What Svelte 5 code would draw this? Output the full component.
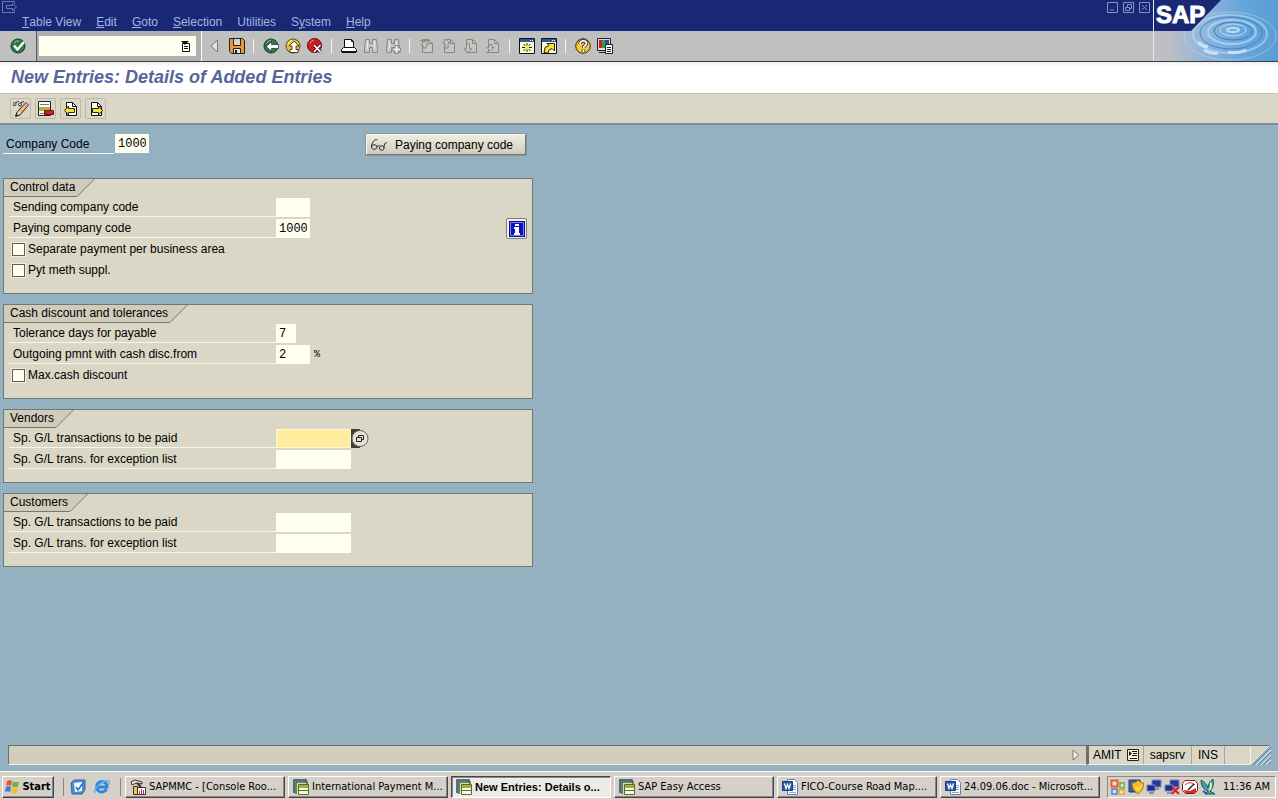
<script lang="ts">
    type Field = {
        kind: 'text' | 'check';
        id: string;
        label: string;
        value?: string;
        size?: 'xs' | 'sm' | 'md';
        unit?: string;
        info?: boolean;
        focused?: boolean;
    };

    const menus = [
        ['', 'T', 'able View'],
        ['', 'E', 'dit'],
        ['', 'G', 'oto'],
        ['', 'S', 'election'],
        ['Utilities', '', ''],
        ['S', 'y', 'stem'],
        ['', 'H', 'elp']
    ];

    const toolGroups = [
        [['save', 'Save']],
        [['back', 'Back'], ['exit', 'Exit'], ['cancel', 'Cancel']],
        [['print', 'Print'], ['find', 'Find'], ['findnext', 'Find next']],
        [['first', 'First page'], ['prev', 'Previous page'], ['next', 'Next page'], ['last', 'Last page']],
        [['session', 'Create session'], ['shortcut', 'Create shortcut']],
        [['help', 'Help'], ['layout', 'Customize layout']]
    ];

    const appTools = [
        ['toggle', 'Display / change'],
        ['delete', 'Delete'],
        ['pageback', 'Previous entry'],
        ['pagenext', 'Next entry']
    ];

    const groups: { title: string; fields: Field[] }[] = [
        {
            title: 'Control data',
            fields: [
                { kind: 'text', id: 'sending', label: 'Sending company code', size: 'sm' },
                { kind: 'text', id: 'paying', label: 'Paying company code', value: '1000', size: 'sm', info: true },
                { kind: 'check', id: 'separate', label: 'Separate payment per business area' },
                { kind: 'check', id: 'suppl', label: 'Pyt meth suppl.' }
            ]
        },
        {
            title: 'Cash discount and tolerances',
            fields: [
                { kind: 'text', id: 'days', label: 'Tolerance days for payable', value: '7', size: 'xs' },
                { kind: 'text', id: 'outgoing', label: 'Outgoing pmnt with cash disc.from', value: '2', size: 'sm', unit: '%' },
                { kind: 'check', id: 'maxdisc', label: 'Max.cash discount' }
            ]
        },
        {
            title: 'Vendors',
            fields: [
                { kind: 'text', id: 'vpaid', label: 'Sp. G/L transactions to be paid', size: 'md', focused: true },
                { kind: 'text', id: 'vexc', label: 'Sp. G/L trans. for exception list', size: 'md' }
            ]
        },
        {
            title: 'Customers',
            fields: [
                { kind: 'text', id: 'cpaid', label: 'Sp. G/L transactions to be paid', size: 'md' },
                { kind: 'text', id: 'cexc', label: 'Sp. G/L trans. for exception list', size: 'md' }
            ]
        }
    ];

    const tasks = [
        { icon: 'mmc', label: 'SAPMMC - [Console Roo...' },
        { icon: 'sapwin', label: 'International Payment M...' },
        { icon: 'sapwin', label: 'New Entries: Details o...', active: true },
        { icon: 'sapwin', label: 'SAP Easy Access' },
        { icon: 'word', label: 'FICO-Course Road Map....' },
        { icon: 'word', label: '24.09.06.doc - Microsoft...' }
    ];

    const tray = ['office', 'shield', 'net', 'netoff', 'gauge', 'bird'];
</script>

{#snippet page(stroke: string, fill: string)}
    <path d="M3.5 1.5h6l4 4v9h-10z" {fill} {stroke} />
    <path d="M9.5 1.5v4h4" fill="none" {stroke} />
{/snippet}

{#snippet screens()}
    <path d="M6 1h9v7H6z" fill="#2838a0" stroke="#7888b8" />
    <path d="M8 9h5v2H8z" fill="#8890a8" />
    <path d="M1 6h8v6H1z" fill="#1c2c90" stroke="#7888b8" />
    <path d="M3 13h5v2H3z" fill="#8890a8" />
{/snippet}

{#snippet icon(name: string)}
    <svg class="icon" viewBox="0 0 16 16" aria-hidden="true">
        {#if name === 'ok'}
            <circle cx="8" cy="8" r="7" fill="#2c7a45" stroke="#173a24" />
            <path d="M4 5a5 5 0 0 1 5-2" fill="none" stroke="#8cc89a" />
            <path d="M4 7.5l3.5 4L14 4" fill="none" stroke="#fff" stroke-width="2.4" />
        {:else if name === 'save'}
            <path d="M.5.5h13l2 2v13H2.5l-2-2z" fill="#e8983a" stroke="#222" />
            <path d="M4.5 1v6.5h7V1" fill="#d8d4d0" stroke="#222" />
            <path d="M4.5 15v-4.5h7V15" fill="#e4e0dc" stroke="#222" />
            <path d="M6 12h2v3H6z" fill="#222" />
        {:else if name === 'back'}
            <circle cx="8" cy="8" r="7" fill="#2c7a45" stroke="#173a24" />
            <path d="M4 5a5 5 0 0 1 4-3" fill="none" stroke="#8cc89a" />
            <path d="M3.5 8.5l5-5v3h7v4h-7v3z" fill="#fff" stroke="#112" stroke-width=".6" />
        {:else if name === 'exit'}
            <circle cx="8" cy="8" r="7" fill="#f0c428" stroke="#5c4608" />
            <path d="M3 6a5 5 0 0 1 4-3.5" fill="none" stroke="#fff6b0" />
            <path d="M9 3L4 8h3v3.5H5v3h8v-3h-2V8h3z" fill="#fff" stroke="#222" stroke-width=".8" />
        {:else if name === 'cancel'}
            <circle cx="7.5" cy="7.5" r="7" fill="#d01c20" stroke="#5c0c0c" />
            <path d="M3 5.5a5 5 0 0 1 4-3.5" fill="none" stroke="#f49090" />
            <path d="M7 7l6.5 7M13.5 7L7 14" stroke="#400" stroke-width="3.2" />
            <path d="M7 7l6.5 7M13.5 7L7 14" stroke="#fff" stroke-width="1.8" />
        {:else if name === 'print'}
            <path d="M3.5 9.5v-8h7l2 2v6" fill="#fff" stroke="#111" />
            <path d="M10.5 1.5v2h2" fill="none" stroke="#111" />
            <path d="M2.5 9.5h11l2 2V14H.5v-2.5z" fill="#fff" stroke="#111" />
            <path d="M1 14h14" fill="none" stroke="#111" stroke-width="2" />
        {:else if name === 'find' || name === 'findnext'}
            <path d="M2.500 1.500h4v4h3v-4h4l1 9v4h-5v-5h-3v5h-5v-4z" fill="#c6c6c6" stroke="#888" />
            <path d="M4.5 3v8M11.5 3v8" stroke="#eee" />
            {#if name === 'findnext'}
                <path d="M11.5 7v9M7.5 11.5H16" stroke="#888" stroke-width="4" />
                <path d="M11.5 8v7M8.5 11.5H15" stroke="#eee" stroke-width="2" />
            {/if}
        {:else if name === 'first'}
            {@render page('#888880', '#c6c6be')}
            <path d="M1 2.5h9M5.5 3L2 7h2v3h3V7h2z" fill="#ccccc2" stroke="#888880" />
        {:else if name === 'prev'}
            {@render page('#888880', '#c6c6be')}
            <path d="M5 1.5L1.5 5H4v5h3V5h2z" fill="#ccccc2" stroke="#888880" />
        {:else if name === 'next'}
            {@render page('#888880', '#c6c6be')}
            <path d="M5 14.5L1 11h2.5V6h3v5H9z" fill="#ccccc2" stroke="#888880" />
        {:else if name === 'last'}
            {@render page('#888880', '#c6c6be')}
            <path d="M1 14.5h9M5.5 13L2 9.5h2v-3h3v3h2z" fill="#ccccc2" stroke="#888880" />
        {:else if name === 'session' || name === 'shortcut'}
            <path d="M.5.5h15v15H.5z" fill="#fffbd8" stroke="#111" />
            <path d="M1 1h14v3H1z" fill="#2c5a94" />
            <path d="M11 2h1v1h-1zM13 2h1v1h-1z" fill="#fff" />
            {#if name === 'session'}
                <path d="M8 5v9M3 9.5h10M4.5 6l7 7M11.5 6l-7 7" stroke="#222" />
                <path d="M6 7.5h4v4H6z" fill="#f8e840" />
            {:else}
                <path d="M3 14.5l1-5 4-2-2-2h7.5V13L11 10.5 8 12l-1 3z" fill="#f4e430" stroke="#222" />
            {/if}
        {:else if name === 'help'}
            <circle cx="8" cy="8" r="7.3" fill="#f4c83c" stroke="#3c300c" />
            <path d="M5 6c0-4 6.5-4 6.5-.5 0 2-3 2-3 4.5M8.5 11.5V14" fill="none" stroke="#222" stroke-width="3.4" />
            <path d="M5 6c0-4 6.5-4 6.5-.5 0 2-3 2-3 4.5M8.5 11.5V14" fill="none" stroke="#fff" stroke-width="1.8" />
        {:else if name === 'layout'}
            <path d="M.5.5h13v12H.5z" fill="#ddd" stroke="#222" />
            <path d="M2 2h3v8H2z" fill="#d81828" />
            <path d="M5 2h3v8H5z" fill="#20a838" />
            <path d="M8 2h4v8H8z" fill="#2848c0" />
            <path d="M2 14h6v1H2z" fill="#222" />
            <path d="M8.5 6.5h7v9h-7z" fill="#fff" stroke="#222" />
            <path d="M10 9.5h4M10 11.5h4M10 13.5h4" stroke="#222" />
        {:else if name === 'toggle'}
            <path d="M0 3.5C0 1 3 1 3 3S0 5 0 3.5M3 2c1-2 2-2 3-1M5.5 3.5c0-2 3-2 3 0s-3 2-3 0M8 2c1-2 3-1 3-1" fill="none" stroke="#222" />
            <path d="M13 1.5L15.5 4 7 14l-4.5 1.5L4 11z" fill="#f0b870" stroke="#222" />
            <path d="M13 2l2 2-2 2.5-2-2z" fill="#e4a4a4" />
            <path d="M5 10.5L7.5 13" stroke="#fff" />
            <path d="M2.5 15.5L3 13l2 1.5z" fill="#222" />
        {:else if name === 'delete'}
            <path d="M.5.5h12v14H.5z" fill="#fff" stroke="#222" />
            <path d="M2 3.5h9M2 12.5h6" stroke="#6c7c98" />
            <path d="M1 6h11v4H1z" fill="#b4b43c" />
            <path d="M6.5 9.5h9v4h-9z" fill="#d42020" stroke="#701010" />
        {:else if name === 'pageback'}
            {@render page('#111', '#fff')}
            <path d="M1.5 9.5l4-4.5v2.5h6v4h-6V14z" fill="#f4e430" stroke="#222" />
        {:else if name === 'pagenext'}
            {@render page('#111', '#fff')}
            <path d="M14.5 9.5l-4-4.5v2.5h-6v4h6V14z" fill="#f4e430" stroke="#222" />
        {:else if name === 'glasses'}
            <path d="M.5 10C.5 7 6 7 6 10S.5 13 .5 10M.5 9.5C1 5 4 1.5 6.5 3M6 10c1-2 2-2 3-.5M8.5 11c0-3 4.5-3 4.5 0s-4.500 3-4.500 0M13 10.5c0-3 1-5 3-5" fill="none" stroke="#222" />
        {:else if name === 'info'}
            <path d="M0 0h16v16H0z" fill="#000c9c" />
            <path d="M1.5 1.5h13v13h-13z" fill="#0810c8" stroke="#8088e0" />
            <path d="M6 3h4v2H6zM5 6h5v6h1v2H5v-2h1V8H5z" fill="#fff" />
        {:else if name === 'mmc'}
            <path d="M1 3l4-2 7 2v2L6 4 2 6z" fill="#e8e4d8" stroke="#333" />
            <path d="M7 4l4 4" stroke="#333" stroke-width="2" />
            <path d="M3.5 7.5h4v8h-4z" fill="#f0c830" stroke="#333" />
            <path d="M7.5 8.5h8v7h-8z" fill="#fff" stroke="#333" />
            <path d="M9.5 12v3M11.5 10v5M13.5 11v4" stroke="#d02060" />
        {:else if name === 'sapwin'}
            <path d="M1 14V1h12v3" fill="#b8c8d8" stroke="#284878" stroke-width="1.5" />
            <path d="M3 15V3h11v3" fill="#d4dca8" stroke="#486830" stroke-width="1.5" />
            <path d="M5.5 5.5h10v10h-10z" fill="#f8f8ec" stroke="#586c28" />
            <path d="M6 6h9v3H6z" fill="#98b040" />
            <path d="M6 11.5h9" stroke="#586c28" />
        {:else if name === 'word'}
            <path d="M5.5.5h7l3 3v12h-10z" fill="#fff" stroke="#6080b8" />
            <path d="M11 6.5h3M11 8.5h3M11 10.5h3M7 13.5h7" stroke="#88a4d0" />
            <path d="M.5 2.5h10v9H.5z" fill="#2c58a8" stroke="#183c80" />
            <path d="M2.5 4.5l1.5 5 1.5-4 1.5 4 1.5-5" fill="none" stroke="#fff" stroke-width="1.3" />
        {:else if name === 'desktop'}
            <path d="M1 4l3-3h11v10l-3 4H2z" fill="#4c8cd0" stroke="#3068a8" />
            <path d="M4 4l8-1v9l-7 1z" fill="#f4f8ff" />
            <path d="M6 8l2 3 5-7" fill="none" stroke="#2868b0" stroke-width="1.5" />
        {:else if name === 'ie'}
            <path d="M12.5 10a5.2 5.2 0 1 1 .5-2H4" fill="none" stroke="#2c88d8" stroke-width="3" />
            <path d="M1 14C-1 10 9 0 15 2c1 1 0 3-1 4" fill="none" stroke="#60b0e8" stroke-width="1.4" />
        {:else if name === 'flag'}
            <path d="M2 2c2-1 4-1 5 0L6 7C5 6 3 6 1 7z" fill="#e8582c" />
            <path d="M8 2.5c2 1 4 1 6 0l-1 5c-2 1-4 1-6 0z" fill="#6cb43c" />
            <path d="M1 8c2-1 4-1 5 0l-1 5c-1-1-3-1-5 0z" fill="#3c78d8" />
            <path d="M7 8.5c2 1 4 1 6 0l-1 5c-2 1-4 1-6 0z" fill="#f4bc28" />
        {:else if name === 'office'}
            <path d="M1.5 1.5h6v6h-6z" fill="#fbe0d0" stroke="#e05c28" stroke-width="2" />
            <path d="M10 4h4v5h-4z" fill="#dcecd0" stroke="#78a840" stroke-width="1.5" />
            <path d="M2 10h5v5H2z" fill="#d4e4f8" stroke="#4c80c8" stroke-width="1.5" />
            <path d="M9 11h5v4H9z" fill="#fce8b0" stroke="#e8a830" stroke-width="1.5" />
        {:else if name === 'shield'}
            <path d="M1 1h11v12H1z" fill="#3860a8" stroke="#203c70" />
            <path d="M4 4c3 0 5-1 6-3 1 2 3 3 5.5 3 0 5-1 8-5.5 11C6 12 4 9 4 4z" fill="#f8c020" stroke="#a87408" />
            <path d="M8 8l2 3 4-5" fill="none" stroke="#fff0a0" />
        {:else if name === 'net'}
            {@render screens()}
        {:else if name === 'netoff'}
            {@render screens()}
            <path d="M8 8l7 7M15 8l-7 7" stroke="#e01c20" stroke-width="2" />
        {:else if name === 'gauge'}
            <path d="M3 1.5h10l2.5 3v7l-3 3h-9l-3-3v-7z" fill="#fff" stroke="#702018" />
            <path d="M2 11l6 1 6-3v4l-2 1H4l-2-2z" fill="#d82820" />
            <path d="M3 6c3-3 7-3 10 0" fill="none" stroke="#d82820" />
            <path d="M6 11l6-6" stroke="#222" stroke-width="1.5" />
        {:else if name === 'bird'}
            <path d="M1 1c4 2 6 5 7 8 0-4 2-7 5-9 1 5 0 9-3 12l5 3H5l3-3C4 11 1 7 1 1z" fill="#38a8a8" stroke="#185858" />
            <path d="M10 4c2 1 1 5-1 7" fill="none" stroke="#e8f4a0" stroke-width="2" />
            <path d="M3 12l4 3" stroke="#3050b0" stroke-width="2" />
        {/if}
    </svg>
{/snippet}

<div class="screen">
    <header class="head">
        <div class="head-main">
            <div class="navy">
                <div class="caption">
                    <svg class="exit-glyph" viewBox="0 0 16 12" aria-hidden="true">
                        <path d="M12.5 3V.5H.5v11h12V9M4.5 4.5h6v-2l4 3.5-4 3.5v-2h-6z" fill="none" stroke="#6878b4" />
                    </svg>
                    <div class="win-buttons">
                        <button aria-label="Minimize">
                            <svg viewBox="0 0 11 11"><path d="M.5.5h10v10H.5zM3 8h4" /></svg>
                        </button>
                        <button aria-label="Restore">
                            <svg viewBox="0 0 11 11"><path d="M.5.5h10v10H.5zM2.5 5.5h4v3h-4zM4.5 5V2.5h4v4H7" /></svg>
                        </button>
                        <button aria-label="Close">
                            <svg viewBox="0 0 11 11"><path d="M.5.5h10v10H.5zM3 3l5 5M8 3L3 8" /></svg>
                        </button>
                    </div>
                </div>
                <nav class="menu">
                    {#each menus as [before, key, after]}
                        <button>{before}<u>{key}</u>{after}</button>
                    {/each}
                </nav>
            </div>

            <div class="toolbar">
                <button class="ok" aria-label="Enter">{@render icon('ok')}</button>
                <div class="command">
                    <input aria-label="Command" />
                    <button aria-label="Command history">
                        <svg viewBox="0 0 10 11" aria-hidden="true">
                            <path d="M1.5 2.5h7v8h-7z" fill="#fff" stroke="#111" />
                            <path d="M0 0h8L4 4zM3 5h4v1H3zM3 7h4v1H3z" fill="#111" />
                        </svg>
                    </button>
                </div>
                <button class="collapse" aria-label="Hide command field">
                    <svg viewBox="0 0 8 12" aria-hidden="true"><path d="M7.5 0v12L1 6z" fill="#e4e4e4" stroke="#777" /></svg>
                </button>
                {#each toolGroups as group}
                    <div class="tool-group">
                        {#each group as [name, label]}
                            <button aria-label={label}>{@render icon(name)}</button>
                        {/each}
                    </div>
                {/each}
            </div>
        </div>

        <div class="brand">
            <svg class="water" viewBox="0 0 124 61" preserveAspectRatio="none" aria-hidden="true">
                <defs>
                    <linearGradient id="sky" x1="0" y1="0" x2="1" y2="0">
                        <stop offset="0" stop-color="#c0c0c0" />
                        <stop offset=".12" stop-color="#bcbec4" />
                        <stop offset=".4" stop-color="#93b6dc" />
                        <stop offset=".7" stop-color="#68a6da" />
                        <stop offset="1" stop-color="#5a9cd6" />
                    </linearGradient>
                </defs>
                <path d="M0 0h124v61H0z" fill="url(#sky)" />
                <g fill="none" stroke="#b9dcf5">
                    <ellipse cx="79" cy="30" rx="6" ry="2" stroke-width="2" />
                    <ellipse cx="79" cy="30" rx="13" ry="6" />
                    <ellipse cx="79" cy="31" rx="19" ry="9" stroke="#3c80c0" />
                    <ellipse cx="78" cy="32" rx="24" ry="12" stroke-width="2" opacity=".7" />
                    <ellipse cx="77" cy="33" rx="31" ry="16" stroke="#4486c4" />
                    <ellipse cx="76" cy="34" rx="37" ry="19" stroke-width="2" opacity=".6" />
                    <ellipse cx="76" cy="36" rx="46" ry="24" opacity=".5" />
                </g>
                <path d="M50 50q6 4 14 3M74 52q10 2 18-2M44 42q4 4 10 5" fill="none" stroke="#d4ecff" stroke-width="3" opacity=".8" />
                <path d="M0 0h67L37 31H0z" fill="#182874" />
            </svg>
            <span class="logo">SAP</span>
        </div>
    </header>

    <h1>New Entries: Details of Added Entries</h1>

    <div class="app-toolbar">
        {#each appTools as [name, label]}
            <button aria-label={label}>{@render icon(name)}</button>
        {/each}
    </div>

    <main>
        <div class="key-row">
            <label for="bukrs">Company Code</label>
            <input id="bukrs" class="sm" value="1000" />
            <button class="push">{@render icon('glasses')}Paying company code</button>
        </div>

        {#each groups as group}
            <section class="panel">
                <h2>
                    <span>{group.title}</span>
                    <svg viewBox="0 0 18 18" aria-hidden="true">
                        <path d="M0 0h17L0 17z" fill="#cfccbc" />
                        <path d="M0 17.5L17.5 0" stroke="#77776c" />
                    </svg>
                </h2>
                {#each group.fields as field}
                    {#if field.kind === 'check'}
                        <div class="row check">
                            <input type="checkbox" id={field.id} />
                            <label for={field.id}>{field.label}</label>
                        </div>
                    {:else}
                        <div class="row">
                            <label for={field.id}>{field.label}</label>
                            <input
                                id={field.id}
                                class={field.size}
                                class:focused={field.focused}
                                value={field.value ?? ''}
                            />
                            {#if field.focused}
                                <button class="f4" aria-label="Possible entries">
                                    <svg viewBox="0 0 18 19" aria-hidden="true">
                                        <path d="M0 0h9v19H0z" fill="#3c3a34" />
                                        <circle cx="9" cy="9.5" r="8" fill="#e4e2d8" stroke="#66645c" />
                                        <path d="M5.5 8.5h5v4h-5zM7.5 8V6.5h5v4H11" fill="none" stroke="#222" />
                                    </svg>
                                </button>
                            {/if}
                            {#if field.unit}<span class="unit">{field.unit}</span>{/if}
                            {#if field.info}
                                <button class="info" aria-label="Information">{@render icon('info')}</button>
                            {/if}
                        </div>
                    {/if}
                {/each}
            </section>
        {/each}
    </main>

    <footer class="status">
        <div class="message">
            <svg viewBox="0 0 8 12" aria-hidden="true"><path d="M1 1v10l5.5-5z" fill="#f4f2e8" stroke="#777" /></svg>
        </div>
        <div class="cells">
            <span class="cell user">
                AMIT
                <svg viewBox="0 0 12 12" aria-hidden="true">
                    <path d="M.5.5h11v11H.5z" fill="#fffbd0" stroke="#222" />
                    <path d="M2 2v5l3-2.5z" fill="#111" />
                    <path d="M5 2.5h5M6 4.5h4M5 6.5h5M3 9.5h7" stroke="#111" />
                </svg>
            </span>
            <span class="cell">sapsrv</span>
            <span class="cell">INS</span>
            <span class="cell last"></span>
        </div>
        <svg class="grip" viewBox="0 0 22 20" aria-hidden="true">
            <path d="M0 0h19L1 19H0z" fill="#d8d5c4" />
            <path d="M0 .5h19" fill="none" stroke="#706e64" />
            <path d="M.5 1v18.5L19 1" fill="none" stroke="#f4f2e8" />
            <path d="M6 20L21 5M11 20L21 10M16 20l5-5" stroke="#e4edf2" />
            <path d="M3 20L21 2M8 20L21 7M13 20l8-8M18 20l3-3" stroke="#6c8494" />
        </svg>
    </footer>

    <div class="taskbar">
        <button class="start">{@render icon('flag')}Start</button>
        <div class="quick">
            <button aria-label="Show Desktop">{@render icon('desktop')}</button>
            <button aria-label="Internet Explorer">{@render icon('ie')}</button>
        </div>
        <div class="tasks">
            {#each tasks as task}
                <button class="task" class:active={task.active}>{@render icon(task.icon)}{task.label}</button>
            {/each}
        </div>
        <div class="tray">
            {#each tray as name}
                {@render icon(name)}
            {/each}
            <time>11:36 AM</time>
        </div>
    </div>
</div>

<style>
    :global(body) {
        margin: 0;
    }

    .screen {
        display: flex;
        flex-direction: column;
        min-height: 100vh;
        background: #94b1c2;
        color: #000;
        font: 12px/16px 'Liberation Sans', Arial, sans-serif;
    }

    button {
        display: flex;
        align-items: center;
        justify-content: center;
        flex: none;
        margin: 0;
        padding: 0;
        border: 0;
        background: none;
        color: inherit;
        font: inherit;
    }

    input {
        box-sizing: border-box;
        margin: 0;
        border: 0;
        border-radius: 0;
        background: #fffff0;
        font: 12px/16px 'Liberation Mono', 'Courier New', monospace;
    }

    input:focus {
        outline: 0;
    }

    svg {
        display: block;
        flex: none;
    }

    .icon {
        width: 16px;
        height: 16px;
    }

    /* Menu and system toolbar */
    .head {
        display: flex;
        border-bottom: 1px solid #3c3c3c;
    }

    .head-main {
        flex: 1;
        min-width: 0;
    }

    .navy {
        height: 31px;
        background: #182874;
    }

    .caption {
        display: flex;
        justify-content: space-between;
        height: 13px;
        padding: 1px 3px 0 2px;
        box-sizing: border-box;
    }

    .exit-glyph {
        width: 16px;
        height: 12px;
    }

    .win-buttons {
        display: flex;
        gap: 5px;
    }

    .win-buttons svg {
        width: 11px;
        height: 11px;
        fill: none;
        stroke: #8490c4;
    }

    .menu {
        display: flex;
        gap: 15px;
        padding-left: 22px;
        color: #a4b4e0;
    }

    .menu button {
        height: 17px;
    }

    .toolbar {
        display: flex;
        align-items: center;
        height: 30px;
        background: #c0c0c0;
    }

    .ok {
        width: 36px;
        height: 30px;
    }

    .command {
        display: flex;
        align-items: center;
        width: 166px;
        height: 30px;
        box-sizing: border-box;
        padding: 0 5px 0 2px;
        border-left: 1px solid #555;
        border-right: 1px solid #fff;
        background: #b0b0b0;
    }

    .command input {
        flex: 1;
        min-width: 0;
        height: 20px;
    }

    .command button {
        width: 20px;
        height: 20px;
        background: #fffff0;
    }

    .command svg {
        width: 10px;
        height: 11px;
    }

    .collapse {
        width: 24px;
        height: 22px;
    }

    .collapse svg {
        width: 8px;
        height: 12px;
    }

    .tool-group {
        display: flex;
    }

    .tool-group button {
        width: 22px;
        height: 22px;
    }

    .tool-group + .tool-group::before {
        content: '';
        width: 1px;
        height: 14px;
        margin: 4px 6px 0 5px;
        background: #f4f4f4;
    }

    .brand {
        position: relative;
        width: 124px;
        border-left: 1px solid #e4e6f0;
    }

    .water {
        width: 100%;
        height: 61px;
    }

    .logo {
        position: absolute;
        top: 1px;
        left: 2px;
        color: #fff;
        font: bold 24px/28px 'Liberation Sans', Arial, sans-serif;
        -webkit-text-stroke: 1px #fff;
    }

    h1 {
        margin: 0;
        padding: 0 11px;
        background: linear-gradient(#f0f0f0, #fff 5px);
        color: #58659c;
        font: italic bold 18px/31px 'Liberation Sans', Arial, sans-serif;
    }

    .app-toolbar {
        display: flex;
        align-items: center;
        gap: 4px;
        height: 32px;
        box-sizing: border-box;
        padding: 0 10px;
        border-top: 1px solid #c8c6b8;
        border-bottom: 2px solid #78909e;
        background: #dad7c6;
    }

    .app-toolbar button {
        width: 21px;
        height: 21px;
        box-sizing: border-box;
        border: 1px solid #bcb9aa;
        border-radius: 2px;
    }

    /* Form area */
    main {
        display: flex;
        flex: 1;
        flex-direction: column;
        gap: 10px;
        max-width: 530px;
        padding: 9px 3px;
    }

    .sm {
        width: 34px;
    }

    .xs {
        width: 20px;
    }

    .md {
        width: 75px;
    }

    .key-row {
        display: flex;
        height: 21px;
        margin-bottom: 13px;
    }

    .key-row label {
        width: 111px;
        height: 20px;
        box-sizing: border-box;
        margin-right: 1px;
        padding: 1px 0 0 3px;
        border-bottom: 1px solid #f4f8fa;
        line-height: 19px;
    }

    .key-row input,
    .row input:not([type]) {
        height: 19px;
        padding: 0 3px;
    }

    .push {
        gap: 8px;
        width: 160px;
        box-sizing: border-box;
        margin-left: auto;
        margin-right: 7px;
        padding-right: 8px;
        border: 1px solid #77756a;
        border-top-color: #f4f4ec;
        border-left-color: #f4f4ec;
        background: linear-gradient(#efede2, #cfccbd);
        box-shadow: 0 0 0 1px #8598a2;
    }

    .panel {
        padding-bottom: 12px;
        border: 1px solid #707870;
        background: #dad7c6;
    }

    h2 {
        display: flex;
        height: 18px;
        margin: 0;
        font: 12px/16px 'Liberation Sans', Arial, sans-serif;
    }

    h2 span {
        height: 17px;
        padding: 0 2px 0 6px;
        border-bottom: 1px solid #77776c;
        background: #cfccbc;
    }

    h2 svg {
        width: 18px;
        height: 18px;
    }

    .row {
        display: flex;
        align-items: center;
        height: 21px;
        padding: 0 5px;
    }

    .row > label {
        width: 267px;
        height: 19px;
        box-sizing: border-box;
        padding-left: 4px;
        border-bottom: 1px solid #f8f6e4;
        line-height: 19px;
    }

    .row.check {
        gap: 3px;
        padding-left: 8px;
    }

    .row.check label {
        width: auto;
        padding: 0;
        border: 0;
    }

    .row input[type='checkbox'] {
        width: 13px;
        height: 13px;
        appearance: none;
        border: 1px solid #605e54;
        box-shadow: 0 0 0 1px #f0eee0;
    }

    .row input.focused {
        background: #ffec9c;
        border: 1px solid #fff8d0;
    }

    .f4 svg {
        width: 18px;
        height: 19px;
    }

    .unit {
        margin-left: 4px;
        font: 10px/16px 'Liberation Mono', 'Courier New', monospace;
    }

    .info {
        width: 21px;
        height: 21px;
        box-sizing: border-box;
        margin-left: auto;
        border: 1px solid #807e74;
        border-radius: 2px;
        background: #f4f2e8;
    }

    /* Status bar */
    .status {
        display: flex;
        height: 20px;
        margin: 0 6px 6px 8px;
    }

    .message,
    .cells {
        display: flex;
        align-items: center;
        box-sizing: border-box;
        border: 1px solid #706e64;
        border-bottom-color: #f0eee4;
        background: #d2cebe;
    }

    .message {
        flex: 1;
        justify-content: flex-end;
        padding-right: 6px;
    }

    .message svg {
        width: 8px;
        height: 12px;
    }

    .cells {
        border-left-width: 2px;
        border-right: 0;
        background: #dad7c6;
    }

    .cell {
        display: flex;
        align-items: center;
        gap: 5px;
        height: 18px;
        padding: 0 6px;
        box-sizing: border-box;
        border-right: 1px solid #a8a698;
    }

    .cell svg {
        width: 12px;
        height: 12px;
    }

    .user {
        padding: 0 4px;
    }

    .last {
        width: 25px;
        border: 0;
    }

    .grip {
        width: 22px;
        height: 20px;
    }

    /* Windows taskbar */
    .taskbar {
        display: flex;
        align-items: center;
        height: 28px;
        box-sizing: border-box;
        padding: 2px 2px 0 2px;
        border-top: 1px solid #f8f8f4;
        background: #d5d1c9;
        font: 11px/14px 'DejaVu Sans Condensed', Tahoma, sans-serif;
    }

    .start,
    .task {
        height: 22px;
        box-sizing: border-box;
        border: 1px solid;
        border-color: #fff #444 #444 #fff;
        box-shadow: inset -1px -1px #888;
    }

    .start {
        gap: 1px;
        width: 52px;
        font-weight: bold;
    }

    .quick {
        display: flex;
        gap: 8px;
        height: 18px;
        margin: 0 4px 0 9px;
        padding: 0 10px 0 6px;
        border-left: 1px solid #888;
        border-right: 1px solid #888;
    }

    .tasks {
        display: flex;
        flex: 1;
        gap: 3px;
        min-width: 0;
    }

    .task {
        flex: 1 1 0;
        gap: 3px;
        min-width: 0;
        justify-content: flex-start;
        padding-left: 4px;
        white-space: nowrap;
    }

    .task.active {
        border-color: #444 #fff #fff #444;
        background: #ecebe6;
        box-shadow: inset 1px 1px #888;
        font-family: 'Liberation Sans', Arial, sans-serif;
        font-weight: bold;
    }

    .tray {
        display: flex;
        align-items: center;
        gap: 2px;
        height: 22px;
        box-sizing: border-box;
        margin-left: 7px;
        padding: 0 5px 0 2px;
        border: 1px solid;
        border-color: #888 #fff #fff #888;
    }

    time {
        margin-left: 5px;
        white-space: nowrap;
    }
</style>
